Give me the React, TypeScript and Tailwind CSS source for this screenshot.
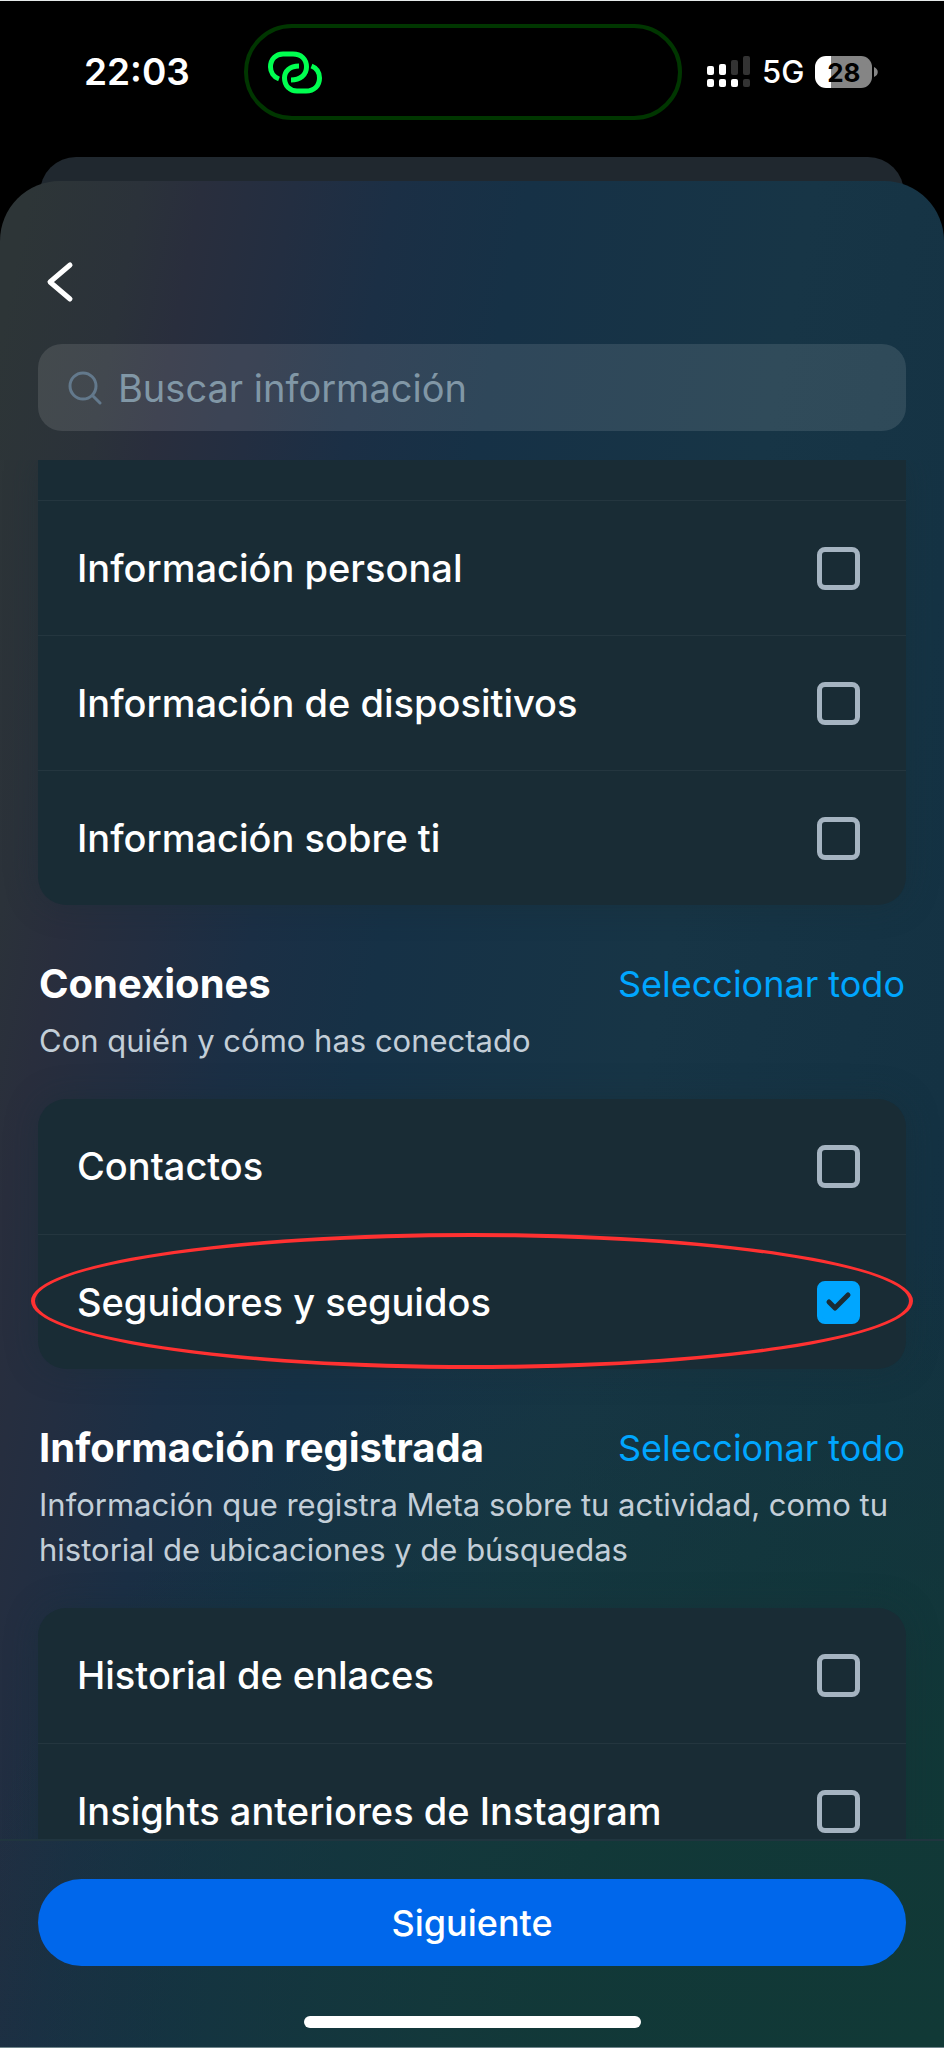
import React from "react";
import { clsx } from "clsx";

interface Item {
  id: string;
  label: string;
  checked?: boolean;
  circled?: boolean;
}

const personalItems: Item[] = [
  { id: "personal", label: "Información personal" },
  { id: "devices", label: "Información de dispositivos" },
  { id: "about", label: "Información sobre ti" },
];

const connectionItems: Item[] = [
  { id: "contacts", label: "Contactos" },
  { id: "followers", label: "Seguidores y seguidos", checked: true, circled: true },
];

const loggedItems: Item[] = [
  { id: "links", label: "Historial de enlaces" },
  { id: "insights", label: "Insights anteriores de Instagram" },
];

function StatusBar() {
  return (
    <header className="flex h-[156px] shrink-0 items-start pt-[23px]">
      <div className="flex h-24 w-[244px] items-center pl-[84px] text-[37px] font-semibold">22:03</div>
      <div className="flex h-24 flex-1 items-center rounded-full border-4 border-[#003600] pl-5">
        <svg viewBox="268 50 54 43" className="h-[43px] w-[54px]" fill="none" stroke="#00ff50" strokeWidth="5">
          <path d="M279 78C273.500 76 270.500 71 270.500 66C270.500 58 276 53 283 53H293C301 53 306.500 58 306.500 66C306.500 74 300 79 291 79" />
          <path d="M299 65C290 65 284.500 70 284.500 77C284.500 85 290 90 297 90H306C314 90 319.500 85 319.500 77C319.500 71 316.500 67 311.500 65" />
        </svg>
      </div>
      <div className="flex h-24 w-[262px] items-center pl-[25px]">
        <svg viewBox="0 0 43 32" className="h-8 w-[43px]" fill="#fff">
          <rect x="0" y="10" width="7" height="9" rx="2" />
          <rect x="12" y="8" width="7" height="11" rx="2" />
          <rect x="24" y="4" width="7" height="15" rx="2" fill="#333" />
          <rect x="36" y="0" width="7" height="19" rx="2" fill="#333" />
          <rect x="0" y="23" width="7" height="8" rx="2" />
          <rect x="12" y="23" width="7" height="8" rx="2" />
          <rect x="24" y="23" width="7" height="8" rx="2" />
          <rect x="36" y="23" width="7" height="8" rx="2" fill="#333" />
        </svg>
        <span className="ml-3 text-[31px] font-medium">5G</span>
        <div className="ml-[11px] flex h-8 w-[57px] items-center justify-center rounded-[11px] bg-linear-to-r from-white from-28% to-[#858585] to-28% text-[26px] font-bold text-black">
          28
        </div>
        <svg viewBox="0 0 4 10" className="ml-0.5 h-2.5 w-1" fill="#858585">
          <path d="M0 0C5 2 5 8 0 10Z" />
        </svg>
      </div>
    </header>
  );
}

function Row({ item }: { item: Item }) {
  return (
    <li className="relative h-[135px] border-t border-[#24363f] first:border-t-0">
      <label htmlFor={item.id} className="flex h-full items-center justify-between pr-[46px] pl-[39px] text-[38px] font-medium">
        {item.label}
        <span className="grid">
          <input
            id={item.id}
            type="checkbox"
            defaultChecked={item.checked}
            className="peer col-start-1 row-start-1 size-[43px] appearance-none rounded-lg border-5 border-[#a5b4c1] checked:border-[#00a6ff] checked:bg-[#00a6ff]"
          />
          <svg
            viewBox="0 0 43 43"
            className="pointer-events-none invisible col-start-1 row-start-1 size-[43px] peer-checked:visible"
            fill="none"
            stroke="#1a2c35"
            strokeWidth="5"
            strokeLinecap="round"
            strokeLinejoin="round"
          >
            <path d="M12 21L18 27L31 14" />
          </svg>
        </span>
      </label>
      {/* red marker around the row */}
      {item.circled && (
        <div className="pointer-events-none absolute -inset-x-[7px] -top-0.5 bottom-0 rounded-[50%] border-4 border-[#ff3131]" />
      )}
    </li>
  );
}

function Card({ items, cutTop }: { items: Item[]; cutTop?: boolean }) {
  return (
    <ul className={clsx("bg-[#192c35] shadow-[0_0_32px_#192c3566]", cutTop ? "rounded-b-[28px] pt-10" : "rounded-[28px]")}>
      {cutTop && <li className="h-0" />}
      {items.map((item) => (
        <Row key={item.id} item={item} />
      ))}
    </ul>
  );
}

function SectionHeading({ title, text }: { title: string; text: string }) {
  return (
    <div className="px-px pt-[53px] pb-9">
      <div className="flex h-[52px] items-center justify-between">
        <h2 className="text-[40px] font-bold">{title}</h2>
        <button className="text-[36px] text-[#00a6ff]">Seleccionar todo</button>
      </div>
      <p className="mt-2 text-[31px] leading-[45px] text-[#c3ced8]">{text}</p>
    </div>
  );
}

export default function App() {
  return (
    <div className="flex h-screen flex-col overflow-hidden border-t border-[#e5e9e9] bg-black font-['Inter',sans-serif] text-white">
      <StatusBar />

      {/* sheet stacked behind the current one */}
      <div className="mx-10 -mb-6 h-12 shrink-0 rounded-t-[36px] bg-[#20282f]" />

      <main className="relative flex min-h-0 flex-1 flex-col rounded-t-[60px] border-b border-[#6f858b] bg-[radial-gradient(1000px_800px_at_100%_100%,#113936_0%,#113936d9_40%,#11393600_100%),linear-gradient(101deg,#2d3537_30px,#2b323a_140px,#292e3d_200px,#232e41_290px,#1b2f45_390px,#163146_520px,#173546_800px,#133142_1200px)]">
        <div className="px-[38px] pt-[76px]">
          <button aria-label="Atrás" className="block pl-2">
            <svg viewBox="0 0 30 50" className="h-[50px] w-[30px]" fill="none" stroke="#fff" strokeWidth="5" strokeLinecap="round" strokeLinejoin="round">
              <path d="M24 8L4 25L24 42" />
            </svg>
          </button>
          <div className="mt-[37px] flex h-[87px] items-center rounded-3xl bg-white/11 pl-[30px]">
            <svg viewBox="0 0 34 34" className="size-[34px] shrink-0" fill="none" stroke="#63798c" strokeWidth="3" strokeLinecap="round">
              <circle cx="15" cy="15" r="13" />
              <path d="M25 25L32 32" />
            </svg>
            <input
              type="text"
              aria-label="Buscar información"
              placeholder="Buscar información"
              className="ml-4 w-full pt-0.5 text-[38px] outline-none placeholder:text-[#8197a6]"
            />
          </div>
        </div>

        <div className="mt-[29px] min-h-0 flex-1 overflow-y-auto px-[38px] [scrollbar-width:none]">
          <Card items={personalItems} cutTop />
          <SectionHeading title="Conexiones" text="Con quién y cómo has conectado" />
          <Card items={connectionItems} />
          <SectionHeading
            title="Información registrada"
            text="Información que registra Meta sobre tu actividad, como tu historial de ubicaciones y de búsquedas"
          />
          <Card items={loggedItems} />
        </div>

        <footer className="flex shrink-0 flex-col items-center border-t-2 border-[#20353f] px-[38px] pt-[38px] pb-[19px]">
          <button className="h-[87px] w-full rounded-full bg-[#0067eb] text-[36px] font-medium">Siguiente</button>
          <div className="mt-[50px] h-3 w-[337px] rounded-full bg-white" />
        </footer>
      </main>
    </div>
  );
}
